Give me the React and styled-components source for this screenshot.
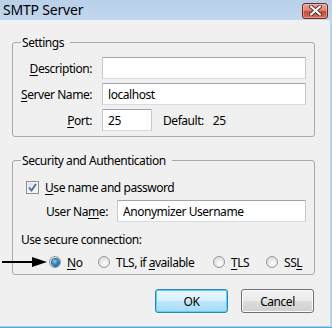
import React from 'react';
import styled, { createGlobalStyle } from 'styled-components';

const GlobalStyle = createGlobalStyle`
  body {
    margin: 0;
    background: #f0f0f0;
    font-family: "Segoe UI", "Noto Sans", Arial, sans-serif;
    font-size: 12px;
    letter-spacing: -0.45px;
    color: #000;
  }
`;

const Window = styled.div`
  position: relative;
  width: 332px;
  height: 328px;
  display: flex;
  flex-direction: column;
  background: #f0f0f0;
  overflow: hidden;
`;

const TitleBar = styled.div`
  height: 20px;
  flex: none;
  display: flex;
  align-items: center;
  justify-content: space-between;
  background: linear-gradient(#b9d0e9, #c2d7ee);
  padding: 0 4px 0 3px;
`;

const Title = styled.span`
  font-size: 14px;
  letter-spacing: -0.2px;
  line-height: 17px;
  margin-top: -1px;
`;

const CloseButton = styled.div`
  width: 26px;
  height: 16px;
  margin-top: 1px;
  box-sizing: border-box;
  border: 1px solid #6b2a24;
  border-radius: 3px;
  display: flex;
  align-items: center;
  justify-content: center;
  background: linear-gradient(#eaa597 0%, #dc8677 45%, #c64a3a 55%, #d86f57 100%);
  box-shadow: inset 0 0 0 1px rgba(255, 210, 200, 0.45);
`;

const Body = styled.div`
  flex: 1;
  display: flex;
  flex-direction: column;
  padding: 15px 15px 0 12px;
  border-right: 2px solid #bcd2ea;
  border-bottom: 1px solid #aec7e2;
  box-shadow: 0 1px 0 #3db4df;
  margin-bottom: 1px;
`;

const Group = styled.fieldset`
  margin: ${({ $top }) => $top || 0}px 0 0 0;
  padding: ${({ $pad }) => $pad};
  border: 1px solid #a8a8a8;
  border-radius: 3px;
  min-width: 0;
`;

const Legend = styled.legend`
  padding: 0 6px 0 1px;
  margin: 0;
  line-height: 15px;
`;

const FormGrid = styled.div`
  display: grid;
  grid-template-columns: 71px 1fr;
  column-gap: 10px;
  row-gap: 4px;
  align-items: center;
`;

const Label = styled.label`
  text-align: right;
  white-space: nowrap;
`;

const TextInput = styled.input`
  box-sizing: border-box;
  height: 22px;
  width: ${({ $w }) => ($w ? `${$w}px` : '100%')};
  margin: 0;
  padding: 0 5px;
  font: inherit;
  letter-spacing: inherit;
  color: #000;
  background: #fff;
  border: 1px solid #abadb3;
  border-top-color: #a0a4ac;
  border-left-color: #c5c9d0;
  border-right-color: #c5c9d0;
  border-bottom-color: #d6dbe2;
  outline: none;
`;

const PortRow = styled.div`
  display: flex;
  align-items: center;
`;

const Static = styled.span`
  margin-left: ${({ $ml }) => $ml || 0}px;
  line-height: 15px;
`;

const Key = styled.u`
  text-decoration-thickness: 1px;
  text-underline-offset: 2px;
`;

const CheckRow = styled.div`
  display: flex;
  align-items: center;
  height: 16px;
  padding-left: 5px;
  gap: 6px;
`;

const CheckBox = styled.span`
  width: 13px;
  height: 13px;
  box-sizing: border-box;
  border: 1px solid #8f8f8f;
  background: linear-gradient(135deg, #dcdcdc, #fbfbfb);
  box-shadow: inset 0 0 0 1px #f4f4f4;
  display: flex;
  align-items: center;
  justify-content: center;
`;

const UserRow = styled.div`
  display: flex;
  align-items: center;
  margin-top: 5px;
  padding-left: 25px;
  gap: 9px;
`;

const SectionText = styled.div`
  margin-top: 10px;
  line-height: 15px;
`;

const RadioRow = styled.div`
  display: flex;
  align-items: center;
  height: 16px;
  margin-top: 7px;
  padding-left: 28px;
`;

const RadioOption = styled.div`
  display: flex;
  align-items: center;
  gap: 6px;
  width: ${({ $w }) => ($w ? `${$w}px` : 'auto')};
  flex: none;
  white-space: nowrap;
`;

const Radio = styled.span`
  width: 12px;
  height: 12px;
  box-sizing: border-box;
  border-radius: 50%;
  border: 1px solid #979797;
  background: radial-gradient(circle at 60% 65%, #fdfdfd 0%, #e4e4e4 60%, #d2d2d2 100%);
  display: flex;
  align-items: center;
  justify-content: center;
  &::after {
    content: '';
    display: ${({ $on }) => ($on ? 'block' : 'none')};
    width: 7px;
    height: 7px;
    border-radius: 50%;
    background: radial-gradient(circle at 40% 35%, #8fd3ff 0%, #2a86c8 45%, #0d4f87 100%);
    box-shadow: 0 0 0 1px #2d5f8a;
  }
`;

const ButtonRow = styled.div`
  display: flex;
  justify-content: flex-end;
  gap: 13px;
  margin-top: 14px;
  padding-right: 1px;
`;

const Button = styled.div`
  width: 73px;
  height: 24px;
  box-sizing: border-box;
  border-radius: 3px;
  border: 1px solid ${({ $default }) => ($default ? '#3c7fb1' : '#707070')};
  background: ${({ $default }) =>
    $default
      ? 'linear-gradient(#eaf6fd 0%, #d9f0fc 50%, #bee6fd 51%, #a7d9f5 100%)'
      : 'linear-gradient(#f2f2f2 0%, #ebebeb 50%, #dddddd 51%, #cfcfcf 100%)'};
  box-shadow: inset 0 0 0 1px ${({ $default }) => ($default ? '#48d8fb' : '#fcfcfc')};
  display: flex;
  align-items: center;
  justify-content: center;
  line-height: 15px;
`;

const Arrow = styled.svg`
  position: absolute;
  left: 1px;
  top: 256px;
`;

export default function App() {
  return (
    <Window>
      <GlobalStyle />
      <TitleBar>
        <Title>SMTP Server</Title>
        <CloseButton>
          <svg width="13" height="11" viewBox="0 0 13 11">
            <path d="M2 1.5 L11 9.5 M11 1.5 L2 9.5" stroke="#5a2a26" strokeWidth="4" strokeLinecap="round" />
            <path d="M2 1.5 L11 9.5 M11 1.5 L2 9.5" stroke="#fff" strokeWidth="2.2" strokeLinecap="round" />
          </svg>
        </CloseButton>
      </TitleBar>
      <Body>
        <Group $pad="7px 8px 5px 8px">
          <Legend>Settings</Legend>
          <FormGrid>
            <Label><Key>D</Key>escription:</Label>
            <TextInput defaultValue="" readOnly />
            <Label><Key>S</Key>erver Name:</Label>
            <TextInput defaultValue="localhost" readOnly />
            <Label><Key>P</Key>ort:</Label>
            <PortRow>
              <TextInput $w={50} defaultValue="25" readOnly />
              <Static $ml={11}>Default:</Static>
              <Static $ml={9}>25</Static>
            </PortRow>
          </FormGrid>
        </Group>
        <Group $top={16} $pad="11px 8px 4px 8px">
          <Legend>Security and Authentication</Legend>
          <CheckRow>
            <CheckBox>
              <svg width="9" height="9" viewBox="0 0 9 9">
                <path d="M1 4.5 L3.5 7.5 L8 1" stroke="#4b6aa3" strokeWidth="1.8" fill="none" />
              </svg>
            </CheckBox>
            <span><Key>U</Key>se name and password</span>
          </CheckRow>
          <UserRow>
            <Label>User Na<Key>m</Key>e:</Label>
            <TextInput defaultValue="Anonymizer Username" readOnly />
          </UserRow>
          <SectionText>Use secure connection:</SectionText>
          <RadioRow>
            <RadioOption $w={49}><Radio $on /><span><Key>N</Key>o</span></RadioOption>
            <RadioOption $w={115}><Radio /><span>TLS, if <Key>a</Key>vailable</span></RadioOption>
            <RadioOption $w={53}><Radio /><span><Key>T</Key>LS</span></RadioOption>
            <RadioOption><Radio /><span>SS<Key>L</Key></span></RadioOption>
          </RadioRow>
        </Group>
        <ButtonRow>
          <Button $default>OK</Button>
          <Button>Cancel</Button>
        </ButtonRow>
      </Body>
      <Arrow width="48" height="12" viewBox="0 0 48 12">
        <path d="M1 6 L34 6" stroke="#000" strokeWidth="2" />
        <path d="M31 1 L46 6 L31 11 Z" fill="#000" />
      </Arrow>
    </Window>
  );
}
